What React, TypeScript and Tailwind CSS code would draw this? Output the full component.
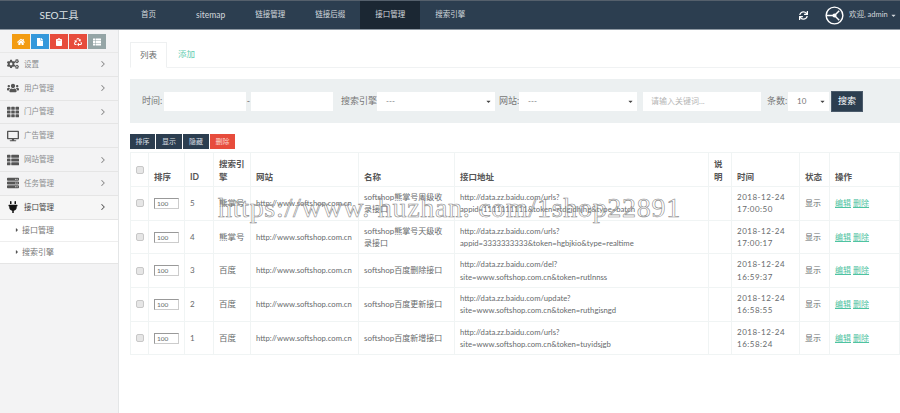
import { ChevronRight } from "lucide-react"
import {
  FaCaretDown,
  FaCaretRight,
  FaClipboard,
  FaCogs,
  FaDesktop,
  FaFile,
  FaHome,
  FaPlug,
  FaRecycle,
  FaServer,
  FaSync,
  FaTh,
  FaThList,
  FaUsers,
} from "react-icons/fa"

const font = "font-['Lato','Noto_Sans_CJK_SC',sans-serif]"

const navItems = ["链接管理", "链接后缀"]

const quickButtons = [
  { icon: FaHome, bg: "bg-[#f39c12]" },
  { icon: FaFile, bg: "bg-[#3498db]" },
  { icon: FaClipboard, bg: "bg-[#e74c3c]" },
  { icon: FaRecycle, bg: "bg-[#e74c3c]" },
  { icon: FaThList, bg: "bg-[#95a5a6]" },
]

const menu = [
  { label: "设置", icon: FaCogs, arrow: true },
  { label: "用户管理", icon: FaUsers, arrow: true },
  { label: "门户管理", icon: FaTh, arrow: true },
  { label: "广告管理", icon: FaDesktop, arrow: false },
  { label: "网站管理", icon: FaThList, arrow: true },
  { label: "任务管理", icon: FaServer, arrow: true },
]

const rows = [
  {
    id: 5,
    engine: "熊掌号",
    name: "softshop熊掌号周级收录接口",
    url: ["http://data.zz.baidu.com/urls?", "appid=1111111111&token=rtdgjdhjhg&type=batch"],
    time: ["2018-12-24", "17:00:50"],
  },
  {
    id: 4,
    engine: "熊掌号",
    name: "softshop熊掌号天级收录接口",
    url: ["http://data.zz.baidu.com/urls?", "appid=3333333333&token=hgbjkio&type=realtime"],
    time: ["2018-12-24", "17:00:17"],
  },
  {
    id: 3,
    engine: "百度",
    name: "softshop百度删除接口",
    url: ["http://data.zz.baidu.com/del?", "site=www.softshop.com.cn&token=rutlnnss"],
    time: ["2018-12-24", "16:59:37"],
  },
  {
    id: 2,
    engine: "百度",
    name: "softshop百度更新接口",
    url: ["http://data.zz.baidu.com/update?", "site=www.softshop.com.cn&token=ruthgisngd"],
    time: ["2018-12-24", "16:58:55"],
  },
  {
    id: 1,
    engine: "百度",
    name: "softshop百度新增接口",
    url: ["http://data.zz.baidu.com/urls?", "site=www.softshop.com.cn&token=tuyidsjgb"],
    time: ["2018-12-24", "16:58:24"],
  },
]

function Check() {
  return <span className="block w-[8px] h-[8px] bg-[#e6e6e6] border border-[#c8c8c8] rounded-[2px]" />
}

function Select({ value, className }: { value: string; className: string }) {
  return (
    <div className={`h-[19px] bg-white flex items-center justify-between pl-[9px] pr-[3px] text-[8px] text-[#777] ${className}`}>
      <span>{value}</span>
      <FaCaretDown className="size-[7px] text-[#444]" />
    </div>
  )
}

function Sidebar() {
  return (
    <aside className="w-[119px] shrink-0 bg-[#f3f3f4] border-r border-[#e4e6e7]">
      <div className="h-[23px] flex justify-center gap-px pt-[4px] border-b border-[#e8e8e8]">
        {quickButtons.map((b, i) => (
          <div key={i} className={`w-[18px] h-[15px] flex items-center justify-center text-white ${b.bg}`}>
            <b.icon className="size-[8px]" />
          </div>
        ))}
      </div>
      {menu.map((m) => (
        <div key={m.label} className="h-[23.8px] flex items-center pl-[7px] pr-[10px] border-b border-[#e5e5e5] text-[7.5px] text-[#8a8c8e]">
          <m.icon className="size-[12px] text-[#555] mr-[5px]" />
          <span className="flex-1">{m.label}</span>
          {m.arrow && <ChevronRight className="size-[10px] text-[#888]" strokeWidth={2.5} />}
        </div>
      ))}
      <div className="h-[23.8px] flex items-center pl-[7px] pr-[10px] bg-[#f6f6f6] border-b border-[#e5e5e5] text-[7.5px] text-[#444]">
        <FaPlug className="size-[12px] text-[#111] mr-[5px]" />
        <span className="flex-1">接口管理</span>
        <ChevronRight className="size-[10px] text-[#555]" strokeWidth={2.5} />
      </div>
      <div className="bg-white">
        <div className="h-[22px] flex items-center pl-[14px] text-[8px] text-[#777] border-b border-[#eeeeee]">
          <FaCaretRight className="size-[6px] text-[#555] mr-[2px]" />
          接口管理
        </div>
        <div className="h-[22px] flex items-center pl-[14px] text-[8px] text-[#777] border-b border-[#e5e5e5]">
          <FaCaretRight className="size-[6px] text-[#555] mr-[2px]" />
          搜索引擎
        </div>
      </div>
    </aside>
  )
}

export default function App() {
  return (
    <div className={`relative w-[900px] h-[413px] overflow-hidden bg-white flex flex-col ${font}`}>
      <header className="h-[30px] shrink-0 bg-[#2c3e50] border-t border-t-[#55606c] border-b border-b-[#8f99a3] flex items-stretch text-[7.5px] text-[#d3d8dd]">
        <div className="w-[118px] flex items-center justify-center text-[10px] text-[#dfe3e6]">SEO工具</div>
        <nav className="flex items-stretch pl-[8px]">
          <a className="px-[15px] mr-[10px] flex items-center">首页</a>
          <a className="px-[15px] flex items-center text-[8.5px]">sitemap</a>
          {navItems.map((n) => (
            <a key={n} className="px-[15px] flex items-center">{n}</a>
          ))}
          <a className="px-[15px] flex items-center bg-[#1b2733]">接口管理</a>
          <a className="px-[15px] flex items-center">搜索引擎</a>
        </nav>
        <div className="ml-auto flex items-center pr-[3px]">
          <FaSync className="size-[9px] text-white mr-[17px]" />
          <svg viewBox="0 0 20 20" className="size-[19px] text-white mr-[5px]" fill="none" stroke="currentColor" strokeWidth="1.5">
            <circle cx="10" cy="10" r="8.8" />
            <path d="M1.5 10 L10 10 L15 5 M10 10 L15 15" />
            <circle cx="10" cy="10" r="1.4" fill="currentColor" />
          </svg>
          <span className="w-[40px] whitespace-nowrap">欢迎, admin</span>
          <FaCaretDown className="size-[7px] ml-px" />
        </div>
      </header>

      <div className="flex flex-1 min-h-0">
        <Sidebar />
        <main className="flex-1 min-w-0 pl-[11px] text-[#676a6c]">
          <div className="mt-[12px] h-[26px] flex border-b border-[#f0f2f3] text-[8.5px]">
            <div className="w-[37px] h-[26px] flex items-center justify-center border border-[#eef0f1] border-b-white bg-white">列表</div>
            <div className="px-[11px] flex items-center text-[#5fcdb0]">添加</div>
          </div>

          <div className="mt-[11px] h-[44px] bg-[#ecf0f1] flex items-center pl-[12px] text-[9px] text-[#777]">
            <span className="w-[22px] whitespace-nowrap">时间:</span>
            <div className="w-[82px] h-[19px] bg-white" />
            <span className="w-[5px] text-center">-</span>
            <div className="w-[82px] h-[19px] bg-white" />
            <span className="ml-[8px] w-[36px] whitespace-nowrap">搜索引擎:</span>
            <Select value="---" className="w-[118px]" />
            <span className="ml-[4px] w-[20px] whitespace-nowrap">网站:</span>
            <Select value="---" className="w-[118px]" />
            <div className="ml-[6px] w-[118px] h-[19px] bg-white flex items-center pl-[8px] text-[8px] text-[#b5b5b5]">请输入关键词...</div>
            <span className="ml-[6px] w-[21px] whitespace-nowrap">条数:</span>
            <Select value="10" className="w-[41px]" />
            <button className="ml-[2px] w-[32px] h-[21px] bg-[#2c3e50] border border-[#4b5b6b] text-[9px] text-white">搜索</button>
          </div>

          <div className="mt-[11px] flex gap-px text-[7px]">
            <button className="w-[25px] h-[15px] bg-[#2c3e50] text-[#d8dde2]">排序</button>
            <button className="w-[26px] h-[15px] bg-[#2c3e50] text-[#d8dde2]">显示</button>
            <button className="w-[26px] h-[15px] bg-[#2c3e50] text-[#d8dde2]">隐藏</button>
            <button className="w-[25px] h-[15px] bg-[#e74c3c] text-[#fbd5d0]">删除</button>
          </div>

          <table className="mt-[3px] w-[769px] table-fixed border-collapse text-[7.7px] leading-[12.5px]">
            <colgroup>
              <col className="w-[18px]" />
              <col className="w-[36px]" />
              <col className="w-[29px]" />
              <col className="w-[37px]" />
              <col className="w-[108px]" />
              <col className="w-[96px]" />
              <col className="w-[254px]" />
              <col className="w-[23px]" />
              <col className="w-[68px]" />
              <col className="w-[30px]" />
              <col className="w-[70px]" />
            </colgroup>
            <thead>
              <tr className="h-[34px] text-[8.5px] text-[#555] font-bold">
                <th className="border border-[#f0f4f4] px-[5px] align-middle"><Check /></th>
                {["排序", "ID", "搜索引擎", "网站", "名称", "接口地址", "说明", "时间", "状态", "操作"].map((h) => (
                  <th key={h} className="border border-[#f0f4f4] px-[5px] pb-[3px] align-bottom text-left font-bold">{h}</th>
                ))}
              </tr>
            </thead>
            <tbody>
              {rows.map((r) => (
                <tr key={r.id} className="h-[33.7px]">
                  <td className="border border-[#f0f4f4] px-[5px]"><Check /></td>
                  <td className="border border-[#f0f4f4] px-[5px]">
                    <div className="w-[25px] h-[11px] border border-[#ccc] border-t-[#999] border-l-[#999] pl-[2px] text-[6.5px] leading-[9px]">100</div>
                  </td>
                  <td className="border border-[#f0f4f4] px-[5px] text-[8px]">{r.id}</td>
                  <td className="border border-[#f0f4f4] px-[5px] text-[8.5px]">{r.engine}</td>
                  <td className="border border-[#f0f4f4] px-[5px] whitespace-nowrap">http://www.softshop.com.cn</td>
                  <td className="border border-[#f0f4f4] px-[5px] text-[8px]">{r.name}</td>
                  <td className="border border-[#f0f4f4] px-[5px]">
                    {r.url.map((u) => (
                      <div key={u} className="whitespace-nowrap">{u}</div>
                    ))}
                  </td>
                  <td className="border border-[#f0f4f4] px-[5px]" />
                  <td className="border border-[#f0f4f4] px-[5px] text-[8px] tracking-[0.5px]">
                    {r.time.map((t) => (
                      <div key={t}>{t}</div>
                    ))}
                  </td>
                  <td className="border border-[#f0f4f4] px-[5px] text-[8px]">显示</td>
                  <td className="border border-[#f0f4f4] px-[5px] text-[8px] text-[#4fc3a1]">
                    <span className="underline">编辑</span> <span className="underline">删除</span>
                  </td>
                </tr>
              ))}
            </tbody>
          </table>
        </main>
      </div>

      <div className="absolute left-[218px] top-[190px] whitespace-nowrap font-['Liberation_Serif',serif] text-[28px] leading-[36px] tracking-[0.7px] text-transparent [-webkit-text-stroke:0.6px_#8a8a8a] pointer-events-none">
        https://www. huzhan. com/1shop22891
      </div>
    </div>
  )
}
